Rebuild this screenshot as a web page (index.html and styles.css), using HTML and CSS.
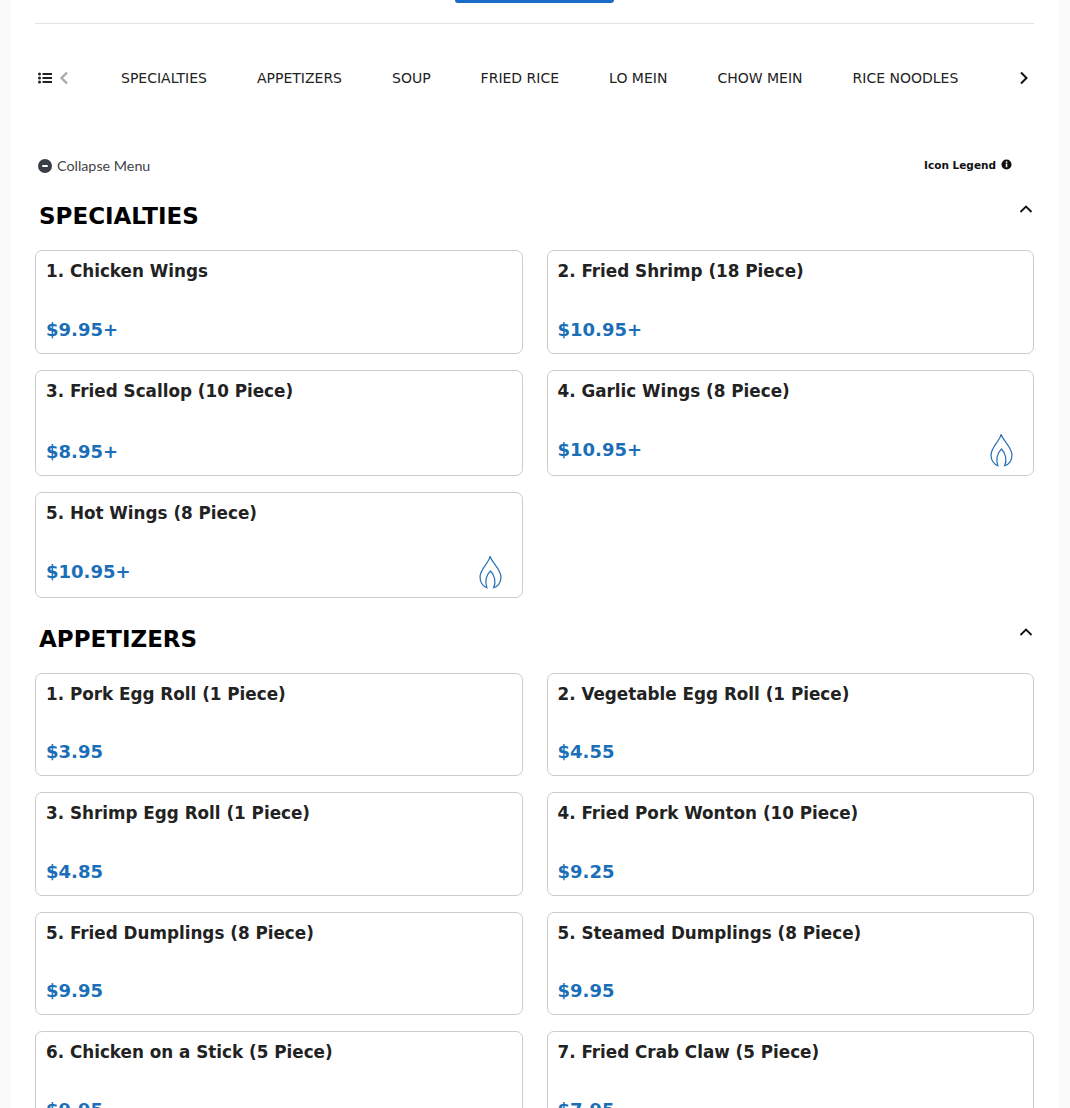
FILE: index.html
```html
<!DOCTYPE html>
<html>
	<head>
		<meta charset="utf-8">
		<title>Menu</title>
		<link rel="stylesheet" href="styles.css">
	</head>
	<body>
		<svg class="defs" width="0" height="0">
			<symbol id="flame" viewBox="0 0 22 32">
				<path d="M10.500 1C10 7 1 13 1 21c0 5 3 9 6.500 10C5.500 26 6.500 19 11 15c4 4 5.500 11 3 16 4-1 7-5 7-10C21 13 13 8 10.500 1z"/>
			</symbol>
		</svg>
		<div class="page">
			<div class="top">
				<div class="order-btn"></div>
			</div>

			<nav class="nav">
				<div class="nav-left">
					<svg class="list-icon" viewBox="0 0 14 12"><circle cx="1.500" cy="2" r="1.500"/><circle cx="1.500" cy="6" r="1.500"/><circle cx="1.500" cy="10" r="1.500"/><path d="M4.500 2H14M4.500 6H14M4.500 10H14"/></svg>
					<svg class="arrow arrow-off" viewBox="0 0 10 14"><path d="M8 1.500L2.500 7 8 12.500"/></svg>
				</div>
				<div class="nav-items">
					<a>SPECIALTIES</a>
					<a>APPETIZERS</a>
					<a>SOUP</a>
					<a>FRIED RICE</a>
					<a>LO MEIN</a>
					<a>CHOW MEIN</a>
					<a>RICE NOODLES</a>
				</div>
				<svg class="arrow" viewBox="0 0 10 14"><path d="M2 1.500L7.500 7 2 12.500"/></svg>
			</nav>

			<div class="tools">
				<div class="collapse">
					<svg class="minus" viewBox="0 0 14 14"><circle cx="7" cy="7" r="7"/><rect x="4" y="6" width="6" height="2" rx="1"/></svg>
					<span>Collapse Menu</span>
				</div>
				<div class="legend">
					<span>Icon Legend</span>
					<svg class="info" viewBox="0 0 12 12"><circle cx="6" cy="6" r="5.500"/><rect x="5.200" y="5" width="1.700" height="4"/><rect x="5.200" y="2.600" width="1.700" height="1.600"/></svg>
				</div>
			</div>

			<section class="section">
				<div class="section-head">
					<h2>SPECIALTIES</h2>
					<svg class="chev" viewBox="0 0 14 8"><path d="M1.500 7L7 1.500 12.500 7"/></svg>
				</div>
				<div class="grid">
					<div class="card"><h3>1. Chicken Wings</h3><div class="foot"><span class="price">$9.95+</span></div></div>
					<div class="card"><h3>2. Fried Shrimp (18 Piece)</h3><div class="foot"><span class="price">$10.95+</span></div></div>
					<div class="card"><h3>3. Fried Scallop (10 Piece)</h3><div class="foot"><span class="price">$8.95+</span></div></div>
					<div class="card"><h3>4. Garlic Wings (8 Piece)</h3><div class="foot foot-icon"><span class="price">$10.95+</span><svg class="flame"><use href="#flame"/></svg></div></div>
					<div class="card"><h3>5. Hot Wings (8 Piece)</h3><div class="foot foot-icon"><span class="price">$10.95+</span><svg class="flame"><use href="#flame"/></svg></div></div>
				</div>
			</section>

			<section class="section">
				<div class="section-head">
					<h2>APPETIZERS</h2>
					<svg class="chev" viewBox="0 0 14 8"><path d="M1.500 7L7 1.500 12.500 7"/></svg>
				</div>
				<div class="grid">
					<div class="card"><h3>1. Pork Egg Roll (1 Piece)</h3><div class="foot"><span class="price">$3.95</span></div></div>
					<div class="card"><h3>2. Vegetable Egg Roll (1 Piece)</h3><div class="foot"><span class="price">$4.55</span></div></div>
					<div class="card"><h3>3. Shrimp Egg Roll (1 Piece)</h3><div class="foot"><span class="price">$4.85</span></div></div>
					<div class="card"><h3>4. Fried Pork Wonton (10 Piece)</h3><div class="foot"><span class="price">$9.25</span></div></div>
					<div class="card"><h3>5. Fried Dumplings (8 Piece)</h3><div class="foot"><span class="price">$9.95</span></div></div>
					<div class="card"><h3>5. Steamed Dumplings (8 Piece)</h3><div class="foot"><span class="price">$9.95</span></div></div>
					<div class="card"><h3>6. Chicken on a Stick (5 Piece)</h3><div class="foot"><span class="price">$9.95</span></div></div>
					<div class="card"><h3>7. Fried Crab Claw (5 Piece)</h3><div class="foot"><span class="price">$7.95</span></div></div>
				</div>
			</section>
		</div>
	</body>
</html>
```

FILE: styles.css
```css
html, body {
	margin: 0;
	height: 1108px;
	overflow: hidden;
	background: #fafafa;
}

.defs {
	display: block;
	height: 0;
}

.page {
	width: 1049px;
	margin-left: 10px;
	padding: 0 25px;
	box-sizing: border-box;
	background: #fff;
	min-height: 1108px;
	font-family: "DejaVu Sans", sans-serif;
	color: #222;
}

.top {
	height: 23px;
	border-bottom: 1px solid #e2e2e2;
	display: flex;
	justify-content: center;
}

.order-btn {
	width: 159px;
	height: 3px;
	background: #1a6cc8;
	border-radius: 0 0 4px 4px;
}

.nav {
	display: flex;
	align-items: center;
	height: 20px;
	margin-top: 44px;
	padding: 0 5px 0 3px;
}

.nav-left {
	display: flex;
	align-items: center;
	gap: 7px;
	width: 83px;
	flex: none;
}

.list-icon {
	width: 14px;
	height: 12px;
	fill: #222;
	stroke: #222;
	stroke-width: 0;
}

.list-icon path {
	fill: none;
	stroke-width: 1.800;
}

.arrow {
	width: 10px;
	height: 14px;
	fill: none;
	stroke: #111;
	stroke-width: 2;
}

.arrow-off {
	stroke: #aaa;
	stroke-width: 2.400;
}

.nav-items {
	flex: 1;
	display: flex;
	gap: 50px;
	font-size: 14px;
	color: #222;
}

.tools {
	display: flex;
	justify-content: space-between;
	align-items: center;
	margin-top: 69.400px;
	padding: 0 22px 0 3px;
}

.collapse {
	display: flex;
	align-items: center;
	gap: 5px;
	font-family: "Lato", sans-serif;
	font-size: 14.300px;
	color: #444;
}

.minus {
	width: 14px;
	height: 14px;
	fill: #3a3f47;
}

.minus rect {
	fill: #fff;
}

.legend {
	display: flex;
	align-items: center;
	gap: 5px;
	margin-bottom: 2px;
	font-size: 10.500px;
	font-weight: bold;
	color: #111;
}

.info {
	width: 11px;
	height: 11px;
	fill: #111;
}

.info rect {
	fill: #fff;
}

.section {
	margin-top: 25.800px;
}

.tools + .section {
	margin-top: 27px;
}

.section-head {
	display: flex;
	justify-content: space-between;
	align-items: flex-start;
	padding: 0 1px 0 4px;
	margin-bottom: 19px;
}

.section-head h2 {
	margin: 0;
	font-size: 23px;
	line-height: 30px;
	font-weight: bold;
	color: #000;
}

.chev {
	width: 14px;
	height: 8px;
	margin-top: 4px;
	fill: none;
	stroke: #111;
	stroke-width: 1.800;
}

.grid {
	display: grid;
	grid-template-columns: 1fr 1fr;
	gap: 16px 24px;
}

.card {
	display: flex;
	flex-direction: column;
	border: 1px solid #ccc;
	border-radius: 7px;
	padding: 10px 10px 11px;
	min-height: 103.400px;
	box-sizing: border-box;
}

.card h3 {
	margin: 0 0 31.800px;
	font-size: 16.800px;
	line-height: 20px;
	font-weight: bold;
	color: #222;
}

.foot {
	margin-top: auto;
	display: flex;
	align-items: center;
	justify-content: space-between;
}

.foot-icon {
	padding-right: 10px;
	margin-bottom: -2.700px;
}

.price {
	font-size: 18px;
	line-height: 24px;
	font-weight: bold;
	color: #1a6fb8;
}

.flame {
	width: 23px;
	height: 34px;
	fill: none;
	stroke: #2a72b5;
	stroke-width: 1.200;
}
```
